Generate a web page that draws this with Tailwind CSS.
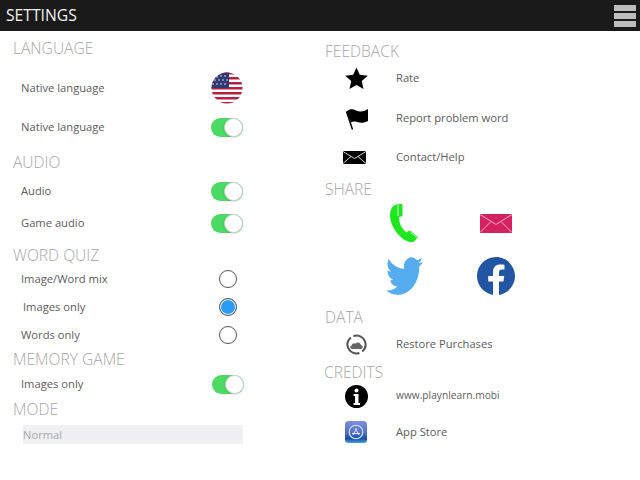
<!DOCTYPE html>
<html lang="en">
<head>
<meta charset="UTF-8">
<title>Settings</title>
<script src="https://cdn.jsdelivr.net/npm/@tailwindcss/browser@4"></script>
</head>
<body class="bg-white w-[640px] h-[480px] overflow-hidden font-['Open_Sans',sans-serif] text-[11.2px] text-[#5c5c5c]">

<!-- Navbar -->
<nav class="bg-[#1a1a1a] h-[31px] flex justify-between items-center pl-[6px] pr-[4px]">
    <h1 class="text-[15.7px] text-[#f2f2f2]">SETTINGS</h1>
    <div class="flex flex-col gap-[2px] w-[22px]">
        <div class="h-[6px] bg-[#bdbdbd]"></div>
        <div class="h-[6px] bg-[#bdbdbd]"></div>
        <div class="h-[6px] bg-[#bdbdbd]"></div>
    </div>
</nav>

<main class="flex">
    <!-- Left column -->
    <section class="w-[325px] pl-[13px] pt-[6px] flex flex-col">
        <h2 class="h-[22px] leading-[22px] text-[15.6px] font-light text-[#a6a6a6]">LANGUAGE</h2>
        <div class="mt-[17px] h-6 w-[230px] pl-2 flex justify-between items-center">
            <span>Native language</span>
            <svg class="w-[32px] h-[32px] shrink-0" viewBox="0 0 32 32">
                <defs><clipPath id="flag"><circle cx="16" cy="16" r="15.5"/></clipPath></defs>
                <g clip-path="url(#flag)">
                    <rect width="32" height="32" fill="#fff"/>
                    <rect y="0" width="32" height="2.5" fill="#b5213f"/>
                    <rect y="5" width="32" height="2.5" fill="#b5213f"/>
                    <rect y="10" width="32" height="2.5" fill="#b5213f"/>
                    <rect y="15" width="32" height="2.5" fill="#b5213f"/>
                    <rect y="20" width="32" height="2.5" fill="#b5213f"/>
                    <rect y="25" width="32" height="2.5" fill="#b5213f"/>
                    <rect y="30" width="32" height="2.5" fill="#b5213f"/>
                    <rect width="18" height="16" fill="#2f3a72"/>
                    <g fill="#e8e8f2">
                        <circle cx="6" cy="5" r=".8"/><circle cx="10" cy="4" r=".8"/><circle cx="14" cy="4" r=".8"/>
                        <circle cx="4" cy="8" r=".8"/><circle cx="8" cy="8" r=".8"/><circle cx="12" cy="8" r=".8"/><circle cx="16" cy="8" r=".8"/>
                        <circle cx="2" cy="12" r=".8"/><circle cx="6" cy="12" r=".8"/><circle cx="10" cy="12" r=".8"/><circle cx="14" cy="12" r=".8"/>
                    </g>
                </g>
            </svg>
        </div>
        <div class="mt-[15px] h-6 w-[230px] pl-2 flex justify-between items-center">
            <span>Native language</span>
            <div class="w-[32px] h-[19px] rounded-full bg-[#4cd964] flex justify-end"><div class="w-[19px] h-[19px] rounded-full bg-white border border-[#cfd8cf] shadow-sm"></div></div>
        </div>

        <h2 class="mt-[12px] h-[22px] leading-[22px] text-[15.6px] font-light text-[#a6a6a6]">AUDIO</h2>
        <div class="mt-[6px] h-6 w-[230px] pl-2 flex justify-between items-center">
            <span>Audio</span>
            <div class="w-[32px] h-[19px] rounded-full bg-[#4cd964] flex justify-end"><div class="w-[19px] h-[19px] rounded-full bg-white border border-[#cfd8cf] shadow-sm"></div></div>
        </div>
        <div class="mt-[8px] h-6 w-[230px] pl-2 flex justify-between items-center">
            <span>Game audio</span>
            <div class="w-[32px] h-[19px] rounded-full bg-[#4cd964] flex justify-end"><div class="w-[19px] h-[19px] rounded-full bg-white border border-[#cfd8cf] shadow-sm"></div></div>
        </div>

        <h2 class="mt-[9px] h-[22px] leading-[22px] text-[15.6px] font-light text-[#a6a6a6]">WORD QUIZ</h2>
        <div class="mt-[1px] h-6 w-[224px] pl-2 flex justify-between items-center">
            <span>Image/Word mix</span>
            <div class="w-[18px] h-[18px] rounded-full border border-[#555] bg-white"></div>
        </div>
        <div class="mt-[4px] h-6 w-[224px] pl-[10px] flex justify-between items-center">
            <span>Images only</span>
            <div class="w-[18px] h-[18px] rounded-full border border-[#555] bg-[#2b9cf2] shadow-[inset_0_0_0_1px_#fff]"></div>
        </div>
        <div class="mt-[4px] h-6 w-[224px] pl-2 flex justify-between items-center">
            <span>Words only</span>
            <div class="w-[18px] h-[18px] rounded-full border border-[#555] bg-white"></div>
        </div>

        <h2 class="mt-[1px] h-[22px] leading-[22px] text-[15.6px] font-light text-[#a6a6a6]">MEMORY GAME</h2>
        <div class="mt-[2px] h-6 w-[231px] pl-2 flex justify-between items-center">
            <span>Images only</span>
            <div class="w-[32px] h-[19px] rounded-full bg-[#4cd964] flex justify-end"><div class="w-[19px] h-[19px] rounded-full bg-white border border-[#cfd8cf] shadow-sm"></div></div>
        </div>

        <h2 class="mt-[2px] h-[22px] leading-[22px] text-[15.6px] font-light text-[#a6a6a6]">MODE</h2>
        <div class="mt-[5px] ml-[10px] w-[220px] h-[19px] leading-[19px] bg-[#efeff4] text-[#a8a8a8]">Normal</div>
    </section>

    <!-- Right column -->
    <section class="pt-[9px] flex flex-col">
        <h2 class="h-[22px] leading-[22px] text-[15.6px] font-light text-[#a6a6a6]">FEEDBACK</h2>
        <div class="mt-[4px] h-6 flex items-center">
            <div class="w-[71px] pl-[20px]">
                <svg class="w-[23px] h-[23px]" viewBox="0 0 24 24"><polygon fill="#000" points="12,0.5 15.4,8.2 23.8,9.1 17.5,14.7 19.3,23 12,18.8 4.7,23 6.5,14.7 0.2,9.1 8.6,8.2"/></svg>
            </div>
            <span class="pt-px">Rate</span>
        </div>
        <div class="mt-[16px] h-6 flex items-center">
            <div class="w-[71px] pl-[20px]">
                <svg class="w-[24px] h-[24px]" viewBox="0 0 24 24">
                    <path fill="#000" d="M1.500 5.500C5 2.500 8 3 11 4.500c4 1.800 8 1.200 12-1.500V15c-3.500 2-7.500 2.300-11 1-2.500-.8-4.500-.6-6 .5Z"/>
                    <path stroke="#000" stroke-width="1.500" fill="none" d="M1.500 5.500 7.500 23.500"/>
                </svg>
            </div>
            <span class="pt-px">Report problem word</span>
        </div>
        <div class="mt-[15px] h-6 flex items-center">
            <div class="w-[71px] pl-[18px]">
                <svg class="w-[23px] h-[13px]" viewBox="0 0 23 13">
                    <rect width="23" height="13" fill="#000"/>
                    <path d="M0 .5 11.500 7.500 23 .5M0 12.500 8 5.500M23 12.500 15 5.500" stroke="#e5e5e5" stroke-width=".9" fill="none"/>
                </svg>
            </div>
            <span>Contact/Help</span>
        </div>

        <h2 class="mt-[9px] h-[22px] leading-[22px] text-[15.6px] font-light text-[#a6a6a6]">SHARE</h2>
        <div class="mt-[4px] h-[38px] flex items-center">
            <div class="w-[92px] pl-[65px]">
                <svg class="w-[29px] h-[38px]" viewBox="0 0 29 38">
                    <path fill="#1fe61f" d="M6 .500 11 0c1 0 1.500.500 1.500 1.500L12.500 11c0 1-.500 1.500-1.500 1.500l-2 .500c-.500 5 2.500 12 7.500 15.500l2-1.500c.800-.500 1.500-.500 2.200 0l6.300 5c.800.800.800 1.500.200 2.200l-2.700 2.800c-1.500 1.500-3 1.500-5 1-8-2-18.500-13-19.500-26C0 7 1.500 2 6 .500Z"/>
                    <path stroke="#fff" stroke-width=".8" d="M8 1v11M20.500 28l6.500 5.500" fill="none"/>
                </svg>
            </div>
            <div class="pl-[63px]">
                <svg class="w-[32px] h-[19px]" viewBox="0 0 32 19">
                    <rect width="32" height="19" fill="#d5215f"/>
                    <path d="M0 .500 16 10.500 32 .500M0 18.500 11 7.500M32 18.500 21 7.500" stroke="#f7c3d6" stroke-width=".9" fill="none"/>
                </svg>
            </div>
        </div>
        <div class="mt-[15px] h-[38px] flex items-center">
            <div class="w-[92px] pl-[61px] h-[38px] flex items-center">
                <svg class="w-[37px] h-[46px] shrink-0" viewBox="0 0 24 24" preserveAspectRatio="none"><path fill="#55acee" d="M23.953 4.57a10 10 0 01-2.825.775 4.958 4.958 0 002.163-2.723c-.951.555-2.005.959-3.127 1.184a4.92 4.92 0 00-8.384 4.482C7.69 8.095 4.067 6.13 1.64 3.162a4.822 4.822 0 00-.666 2.475c0 1.71.87 3.213 2.188 4.096a4.904 4.904 0 01-2.228-.616v.06a4.923 4.923 0 003.946 4.827 4.996 4.996 0 01-2.212.085 4.936 4.936 0 004.604 3.417 9.867 9.867 0 01-6.102 2.105c-.39 0-.779-.023-1.17-.067a13.995 13.995 0 007.557 2.209c9.053 0 13.998-7.496 13.998-13.985 0-.21 0-.42-.015-.63A9.935 9.935 0 0024 4.59z"/></svg>
            </div>
            <div class="pl-[60px]">
                <svg class="w-[38px] h-[38px]" viewBox="0 0 24 24"><path fill="#2355a5" d="M24 12.073c0-6.627-5.373-12-12-12s-12 5.373-12 12c0 5.990 4.388 10.954 10.125 11.854v-8.385H7.078v-3.470h3.047V9.430c0-3.007 1.792-4.669 4.533-4.669 1.312 0 2.686.235 2.686.235v2.953H15.830c-1.491 0-1.956.925-1.956 1.874v2.250h3.328l-.532 3.470h-2.796v8.385C19.612 23.027 24 18.062 24 12.073z"/></svg>
            </div>
        </div>

        <h2 class="mt-[11px] h-[22px] leading-[22px] text-[15.6px] font-light text-[#a6a6a6]">DATA</h2>
        <div class="mt-[4px] h-6 flex items-center">
            <div class="w-[71px] pl-[21px]">
                <svg class="w-[21px] h-[21px]" viewBox="0 0 21 21">
                    <circle cx="10.500" cy="10.500" r="9" fill="none" stroke="#555" stroke-width="2" stroke-dasharray="25 3.300" transform="rotate(-110 10.500 10.500)"/>
                    <path fill="#666" d="M6 15c-2 0-2.500-3-.300-3.500.200-2.200 2.700-3 4-1.800 1.400-2.200 5-1.500 5.200 1.400 2.300.200 2.400 3.900.300 3.900Z"/>
                </svg>
            </div>
            <span>Restore Purchases</span>
        </div>

        <h2 class="mt-[5px] -ml-px h-[22px] leading-[22px] text-[15.6px] font-light text-[#a6a6a6]">CREDITS</h2>
        <div class="mt-[1px] h-6 flex items-center">
            <div class="w-[71px] pl-[20px]">
                <svg class="w-[23px] h-[23px]" viewBox="0 0 23 23">
                    <circle cx="11.500" cy="11.500" r="11.500" fill="#000"/>
                    <circle cx="11.500" cy="5.500" r="2" fill="#fff"/>
                    <path fill="#fff" d="M8.500 9h5v9h1.500v2H8.500v-2H10v-7H8.500Z"/>
                </svg>
            </div>
            <span class="text-[10.2px]">www.playnlearn.mobi</span>
        </div>
        <div class="mt-[12px] h-6 flex items-center">
            <div class="w-[71px] pl-[20px]">
                <svg class="w-[22px] h-[22px]" viewBox="0 0 22 22">
                    <defs><linearGradient id="appstore" x1="0" y1="0" x2="0" y2="1"><stop offset="0" stop-color="#7f8fdc"/><stop offset=".55" stop-color="#4f70c8"/><stop offset=".8" stop-color="#1d4f9e"/><stop offset="1" stop-color="#3aa6e8"/></linearGradient></defs>
                    <rect width="22" height="22" rx="3.500" fill="url(#appstore)"/>
                    <circle cx="11" cy="11" r="6.800" fill="none" stroke="#e4e9fa" stroke-width="1.100"/>
                    <path d="M8 14 11.500 7.500M14 14 10.500 7.500M7 12.500H15" stroke="#e4e9fa" stroke-width="1" fill="none"/>
                </svg>
            </div>
            <span>App Store</span>
        </div>
    </section>
</main>

</body>
</html>
